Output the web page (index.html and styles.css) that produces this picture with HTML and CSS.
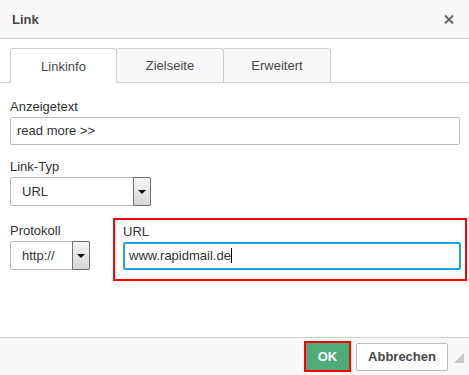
FILE: index.html
```html
<!DOCTYPE html>
<html lang="de">

<head>
    <meta charset="UTF-8">
    <meta name="viewport" content="width=device-width, initial-scale=1.0">
    <title>Link</title>
    <link rel="stylesheet" href="styles.css">
</head>

<body>
    <div class="dialog">
        <div class="dlg-head">
            <span class="title">Link</span>
            <span class="close">
                <svg width="10" height="9" viewBox="0 0 10 9">
                    <path d="M1 0.5 L9 8.5 M9 0.5 L1 8.5" stroke="#666" stroke-width="2" />
                </svg>
            </span>
        </div>

        <div class="tabs">
            <div class="tab active">Linkinfo</div>
            <div class="tab">Zielseite</div>
            <div class="tab">Erweitert</div>
        </div>

        <div class="dlg-body">
            <div class="field">
                <label>Anzeigetext</label>
                <div class="input">read more &gt;&gt;</div>
            </div>

            <div class="field">
                <label>Link-Typ</label>
                <div class="select type">
                    <span class="val">URL</span>
                    <span class="arrow"></span>
                </div>
            </div>

            <div class="row">
                <div class="field proto">
                    <label>Protokoll</label>
                    <div class="select">
                        <span class="val">http://</span>
                        <span class="arrow"></span>
                    </div>
                </div>
                <div class="field highlight">
                    <label>URL</label>
                    <div class="input focus">www.rapidmail.de<span class="caret"></span></div>
                </div>
            </div>
        </div>

        <div class="dlg-foot">
            <div class="ok-wrap"><button class="btn ok">OK</button></div>
            <button class="btn cancel">Abbrechen</button>
            <span class="grip"></span>
        </div>
    </div>
</body>

</html>
```

FILE: styles.css
```css
* {
    margin: 0;
    padding: 0;
    box-sizing: border-box;
}

body {
    font: 13px "Liberation Sans", Arial, sans-serif;
    color: #333;
    background: #fff;
}

.dialog {
    width: 469px;
    height: 375px;
    display: flex;
    flex-direction: column;
}

.dlg-head {
    height: 39px;
    background-color: #f8f8f8;
    border-bottom: 1px solid #d1d1d1;
    display: flex;
    align-items: center;
    justify-content: space-between;
    padding: 0 15px 0 12px;
}

.title {
    font-weight: bold;
    color: #484848;
}

.close svg {
    display: block;
}

.tabs {
    display: flex;
    margin-top: 9px;
    padding-left: 10px;
    height: 35px;
    border-bottom: 1px solid #d1d1d1;
}

.tab {
    width: 108px;
    height: 34px;
    margin-left: -1px;
    border: 1px solid #d1d1d1;
    border-bottom: none;
    border-radius: 3px 3px 0 0;
    background-color: #f8f8f8;
    color: #484848;
    display: flex;
    align-items: center;
    justify-content: center;
}

.tab:first-child {
    width: 107px;
    margin-left: 0;
}

.tab.active {
    background-color: #fff;
    height: 35px;
}

.dlg-body {
    flex: 1;
    padding: 16px 9px 0 10px;
}

label {
    display: block;
    line-height: 16px;
    margin-bottom: 2px;
}

.field+.field {
    margin-top: 14px;
}

.input {
    height: 28px;
    border: 1px solid #bcbcbc;
    border-radius: 2px;
    padding: 0 6px;
    line-height: 26px;
    white-space: nowrap;
}

.input.focus {
    border: 2px solid #2a9fea;
    padding: 0 4px;
    line-height: 24px;
}

.caret {
    display: inline-block;
    width: 1px;
    height: 15px;
    background: #000;
    vertical-align: -3px;
}

.select {
    height: 29px;
    border: 1px solid #bcbcbc;
    border-radius: 2px;
    display: flex;
}

.select.type {
    width: 141px;
}

.select .val {
    flex: 1;
    padding-left: 11px;
    line-height: 27px;
}

.arrow {
    width: 18px;
    margin: -1px -1px -1px 0;
    border: 1px solid #707070;
    border-radius: 0 2px 2px 0;
    background: linear-gradient(#f6f6f6, #d6d6d6);
    display: flex;
    align-items: center;
    justify-content: center;
}

.arrow::after {
    content: "";
    border-left: 4px solid transparent;
    border-right: 4px solid transparent;
    border-top: 4px solid #111;
}

.row {
    display: flex;
    margin-top: 12px;
}

.proto {
    flex: 0 0 80px;
    margin-top: 5px;
}

.field.highlight {
    flex: 0 0 354px;
    margin-top: 0;
    margin-left: 23px;
    border: 2px solid #f00;
    padding: 4px 4px 9px 8px;
}

.dlg-foot {
    height: 38px;
    border-top: 1px solid #d1d1d1;
    background-color: #f8f8f8;
    display: flex;
    align-items: center;
    justify-content: flex-end;
    gap: 5px;
    padding-right: 21px;
    position: relative;
}

.btn {
    font: bold 13px "Liberation Sans", Arial, sans-serif;
    cursor: pointer;
}

.ok-wrap {
    border: 2px solid #f00;
}

.ok {
    display: block;
    width: 43px;
    height: 27px;
    border: none;
    background-color: #4fab78;
    color: #fff;
}

.cancel {
    width: 92px;
    height: 28px;
    border: 1px solid #bcbcbc;
    border-radius: 2px;
    background-color: #fff;
    color: #484848;
}

.grip {
    position: absolute;
    right: 5px;
    bottom: 12px;
    border-left: 10px solid transparent;
    border-bottom: 10px solid #c9c9c9;
}
```
